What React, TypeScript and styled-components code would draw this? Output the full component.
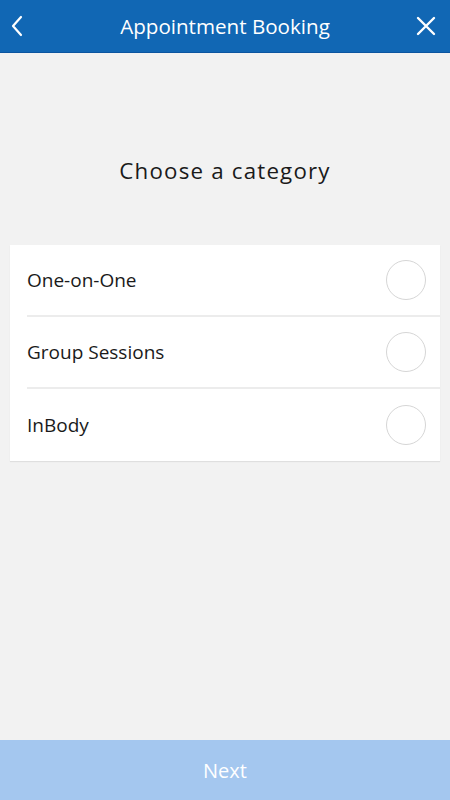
import React, { useState } from 'react';
import styled, { createGlobalStyle } from 'styled-components';

const GlobalStyle = createGlobalStyle`
  html, body {
    margin: 0;
    padding: 0;
    height: 100%;
  }
  body {
    font-family: "Open Sans", "Noto Sans", sans-serif;
    background: #f2f2f2;
  }
  #root {
    height: 100%;
  }
`;

const Page = styled.div`
  display: flex;
  flex-direction: column;
  height: 800px;
  width: 450px;
  background: #f2f2f2;
`;

const Header = styled.header`
  height: 53px;
  background: #1167b4;
  border-bottom: 1px solid #0b55a0;
  display: grid;
  grid-template-columns: 1fr auto 1fr;
  align-items: center;
  padding: 0 12px 0 5px;
  box-sizing: border-box;
  flex-shrink: 0;
`;

const IconButton = styled.button<{ $end?: boolean }>`
  width: 24px;
  height: 40px;
  padding: 0;
  border: none;
  background: transparent;
  display: flex;
  align-items: center;
  justify-content: center;
  justify-self: ${p => (p.$end ? 'end' : 'start')};
  cursor: pointer;
`;

const HeaderTitle = styled.h1`
  margin: 0 0 0 7px;
  color: #ffffff;
  font-size: 20.6px;
  font-weight: 400;
`;

const Main = styled.main`
  flex: 1;
  display: flex;
  flex-direction: column;
  padding: 0 10px;
`;

const Heading = styled.h2`
  margin: 103px 0 59px;
  text-align: center;
  font-size: 22.3px;
  font-weight: 400;
  letter-spacing: 1.2px;
  color: #1a1a1a;
  line-height: 30px;
`;

const List = styled.ul`
  list-style: none;
  margin: 0;
  padding: 0;
  background: #ffffff;
  box-shadow: 0 1px 1px rgba(0, 0, 0, 0.08);
`;

const Row = styled.li<{ $last: boolean }>`
  height: 72px;
  margin-left: 17px;
  padding-right: 14px;
  display: flex;
  align-items: center;
  justify-content: space-between;
  border-bottom: ${p => (p.$last ? 'none' : '2px solid #ececec')};
  box-sizing: border-box;
  cursor: pointer;
`;

const Label = styled.span`
  font-size: 19px;
  color: #1a1a1a;
`;

const Radio = styled.span<{ $checked: boolean }>`
  width: 40px;
  height: 40px;
  border-radius: 50%;
  border: 1px solid #d6d6d6;
  box-sizing: border-box;
  background: ${p => (p.$checked ? '#1167b4' : '#ffffff')};
`;

const NextButton = styled.button<{ $enabled: boolean }>`
  height: 60px;
  width: 100%;
  border: none;
  background: ${p => (p.$enabled ? '#1167b4' : '#a4c7ef')};
  color: #ffffff;
  font-family: "Open Sans", "Noto Sans", sans-serif;
  font-size: 20px;
  flex-shrink: 0;
  cursor: pointer;
`;

const categories = ['One-on-One', 'Group Sessions', 'InBody'];

export default function App() {
  const [selected, setSelected] = useState<number | null>(null);

  return (
    <>
      <GlobalStyle />
      <Page>
        <Header>
          <IconButton aria-label="Back">
            <svg width="14" height="24" viewBox="0 0 14 24" fill="none">
              <path d="M11 3 L3 12 L11 21" stroke="#fff" strokeWidth="2.2" strokeLinecap="round" strokeLinejoin="round" />
            </svg>
          </IconButton>
          <HeaderTitle>Appointment Booking</HeaderTitle>
          <IconButton $end aria-label="Close">
            <svg width="20" height="20" viewBox="0 0 20 20" fill="none">
              <path d="M2 2 L18 18 M18 2 L2 18" stroke="#fff" strokeWidth="2.4" strokeLinecap="round" />
            </svg>
          </IconButton>
        </Header>
        <Main>
          <Heading>Choose a category</Heading>
          <List>
            {categories.map((c, i) => (
              <Row key={c} $last={i === categories.length - 1} onClick={() => setSelected(i)}>
                <Label>{c}</Label>
                <Radio $checked={selected === i} />
              </Row>
            ))}
          </List>
        </Main>
        <NextButton $enabled={selected !== null}>Next</NextButton>
      </Page>
    </>
  );
}
